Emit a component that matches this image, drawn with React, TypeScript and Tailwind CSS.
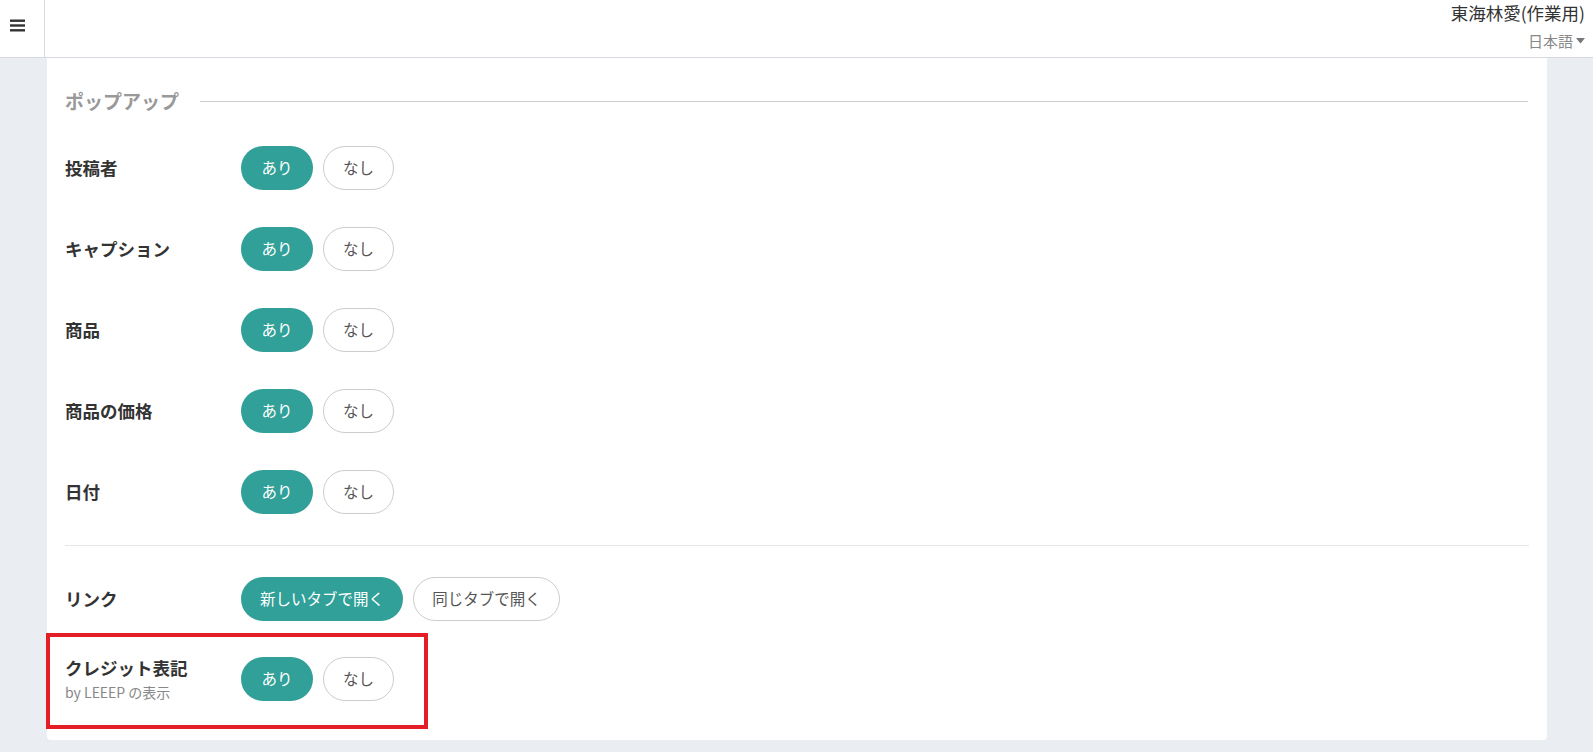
import React from "react";

const font = { fontFamily: '"Noto Sans CJK JP", "Noto Sans", sans-serif' };

function Toggle({ on, off, onW, offW }: { on: string; off: string; onW: string; offW: string }) {
  return (
    <div className="flex items-center gap-[10px]">
      <button className={`h-[44px] ${onW} rounded-full bg-[#31a098] text-white text-[15.5px] leading-none`}>{on}</button>
      <button className={`h-[44px] ${offW} rounded-full border border-[#cccccc] bg-white text-[#555555] text-[15.5px] leading-none`}>{off}</button>
    </div>
  );
}

function Row({ label, sub, children }: { label: string; sub?: string; children: React.ReactNode }) {
  return (
    <div className="flex items-center h-[44px]">
      <div className="w-[176px] shrink-0">
        <div className="text-[17.5px] font-bold text-[#333333] leading-[24px]">{label}</div>
        {sub && <div className="text-[14px] text-[#888888] leading-[20px] mt-[2px]">{sub}</div>}
      </div>
      {children}
    </div>
  );
}

export default function App() {
  const items = ["投稿者", "キャプション", "商品", "商品の価格", "日付"];
  return (
    <div className="w-[1593px] h-[752px] bg-[#eaedf2] flex flex-col overflow-hidden" style={font}>
      <header className="h-[58px] bg-white border-b border-[#d8d8e0] flex shrink-0">
        <div className="w-[45px] border-r border-[#d8d8e0] pl-[10px] pt-[19px]">
          <svg width="15" height="13" viewBox="0 0 15 13">
            <rect x="0" y="0.5" width="15" height="2.4" fill="#333" />
            <rect x="0" y="5.3" width="15" height="2.4" fill="#333" />
            <rect x="0" y="10.1" width="15" height="2.4" fill="#333" />
          </svg>
        </div>
        <div className="flex-1" />
        <div className="flex flex-col items-end pr-[8px] pt-[0px]">
          <div className="text-[17.5px] text-[#333333] leading-[26px]">東海林愛(作業用)</div>
          <div className="flex items-center text-[15px] text-[#888888] leading-[20px] mt-[5px]">
            日本語
            <svg width="9" height="6" viewBox="0 0 9 6" className="ml-[3px]">
              <path d="M0 0 L9 0 L4.5 5.5 Z" fill="#777" />
            </svg>
          </div>
        </div>
      </header>
      <div className="flex-1 flex pl-[47px]">
        <div className="w-[1500px] h-[682px] bg-white rounded-b-[4px] px-[18px]">
          <div className="flex items-center pt-[30px]">
            <div className="text-[19px] font-bold text-[#999999] leading-[26px]">ポップアップ</div>
            <div className="flex-1 h-px bg-[#cccccc] ml-[21px] mr-[1px]" />
          </div>
          <div className="flex flex-col gap-[37px] mt-[32px]">
            {items.map((l) => (
              <Row key={l} label={l}>
                <Toggle on="あり" off="なし" onW="w-[72px]" offW="w-[71px]" />
              </Row>
            ))}
          </div>
          <div className="h-px bg-[#e6e6e6] mt-[31px]" />
          <div className="mt-[31px]">
            <Row label="リンク">
              <Toggle on="新しいタブで開く" off="同じタブで開く" onW="w-[162px]" offW="w-[147px]" />
            </Row>
          </div>
          <div className="mt-[36px] relative">
            <Row label="クレジット表記" sub="by LEEEP の表示">
              <Toggle on="あり" off="なし" onW="w-[72px]" offW="w-[71px]" />
            </Row>
            <div className="absolute left-[-19px] top-[-24px] w-[382px] h-[96px] border-[4px] border-[#e41e26] pointer-events-none" />
          </div>
        </div>
      </div>
    </div>
  );
}
